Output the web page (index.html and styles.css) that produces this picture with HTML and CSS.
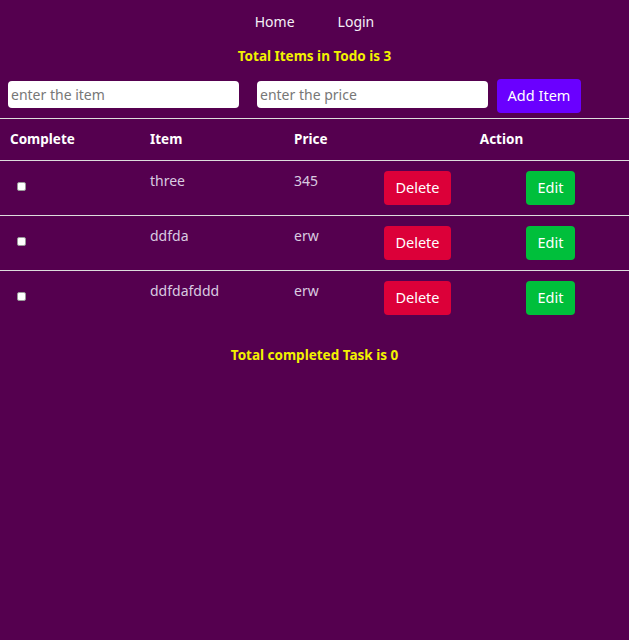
FILE: index.html
```html
<!DOCTYPE html>
<html>
<head>
<meta charset="utf-8">
<link rel="stylesheet" href="styles.css">
</head>
<body>
<nav class="nav">
  <a class="nav-link" href="#">Home</a>
  <a class="nav-link" href="#">Login</a>
</nav>
<h3 class="total">Total Items in Todo is 3</h3>
<form class="add-form">
  <input class="field" type="text" placeholder="enter the item">
  <input class="field field-price" type="text" placeholder="enter the price">
  <button class="btn btn-add" type="button">Add Item</button>
</form>
<table class="todo">
  <colgroup>
    <col class="col1">
    <col class="col2">
    <col class="col3">
    <col class="col4">
    <col class="col5">
  </colgroup>
  <thead>
    <tr>
      <th>Complete</th>
      <th>Item</th>
      <th>Price</th>
      <th class="action" colspan="2">Action</th>
    </tr>
  </thead>
  <tbody>
    <tr>
      <td><input class="check" type="checkbox"></td>
      <td>three</td>
      <td>345</td>
      <td><button class="btn btn-delete" type="button">Delete</button></td>
      <td><button class="btn btn-edit" type="button">Edit</button></td>
    </tr>
    <tr>
      <td><input class="check" type="checkbox"></td>
      <td>ddfda</td>
      <td>erw</td>
      <td><button class="btn btn-delete" type="button">Delete</button></td>
      <td><button class="btn btn-edit" type="button">Edit</button></td>
    </tr>
    <tr>
      <td><input class="check" type="checkbox"></td>
      <td>ddfdafddd</td>
      <td>erw</td>
      <td><button class="btn btn-delete" type="button">Delete</button></td>
      <td><button class="btn btn-edit" type="button">Edit</button></td>
    </tr>
  </tbody>
</table>
<h3 class="total total-bottom">Total completed Task is 0</h3>
</body>
</html>
```
FILE: styles.css
```css
html, body {
  margin: 0;
  padding: 0;
  background: #55004f;
  font-family: "Noto Sans", "DejaVu Sans", sans-serif;
  height: 100%;
}

.nav {
  display: flex;
  justify-content: center;
  gap: 43px;
  padding-top: 12px;
  line-height: 20px;
}

.nav-link {
  color: #f4f0f6;
  text-decoration: none;
  font-size: 14px;
}

.total {
  margin: 14px 0 0;
  text-align: center;
  color: #f2f200;
  font-size: 13.5px;
  font-weight: 700;
  line-height: 20px;
}

.add-form {
  display: flex;
  align-items: flex-start;
  padding: 13px 8px 0;
}

.field {
  box-sizing: border-box;
  width: 231px;
  height: 27px;
  margin-top: 2px;
  border: none;
  border-radius: 4px;
  background: #fff;
  padding: 0 3px;
  font-family: inherit;
  font-size: 14px;
  color: #333;
  outline: none;
}

.field::placeholder {
  color: #777;
}

.field-price {
  margin-left: 18px;
}

.btn {
  border: none;
  border-radius: 4px;
  color: #fff;
  font-family: inherit;
  font-size: 14.5px;
  height: 34px;
  padding: 0 0 2px;
  cursor: pointer;
}

.btn-add {
  margin-left: 9px;
  width: 84px;
  background: #6a00ff;
}

.todo {
  width: 100%;
  margin-top: 5px;
  border-collapse: collapse;
  table-layout: fixed;
}

.col1 { width: 140px; }
.col2 { width: 144px; }
.col3 { width: 90px; }
.col4 { width: 142px; }
.col5 { width: 113px; }

.todo tr {
  border-top: 1px solid #ddd;
}

.todo th,
.todo td {
  padding: 10px;
  text-align: left;
  vertical-align: top;
  line-height: 20px;
}

.todo th {
  color: #fff;
  font-size: 13.5px;
  font-weight: 700;
  line-height: 21px;
}

.todo th.action {
  text-align: center;
}

.todo td {
  color: #d9cbe0;
  font-size: 14px;
}

.check {
  appearance: none;
  -webkit-appearance: none;
  box-sizing: border-box;
  width: 9px;
  height: 9px;
  margin: 11px 0 0 7px;
  background: #fff;
  border: 1px solid #999;
  border-radius: 2px;
  display: block;
}

.btn-delete {
  width: 67px;
  background: #dc0039;
}

.btn-edit {
  width: 49px;
  background: #00bf3b;
}

.total-bottom {
  margin-top: 20px;
}
```
